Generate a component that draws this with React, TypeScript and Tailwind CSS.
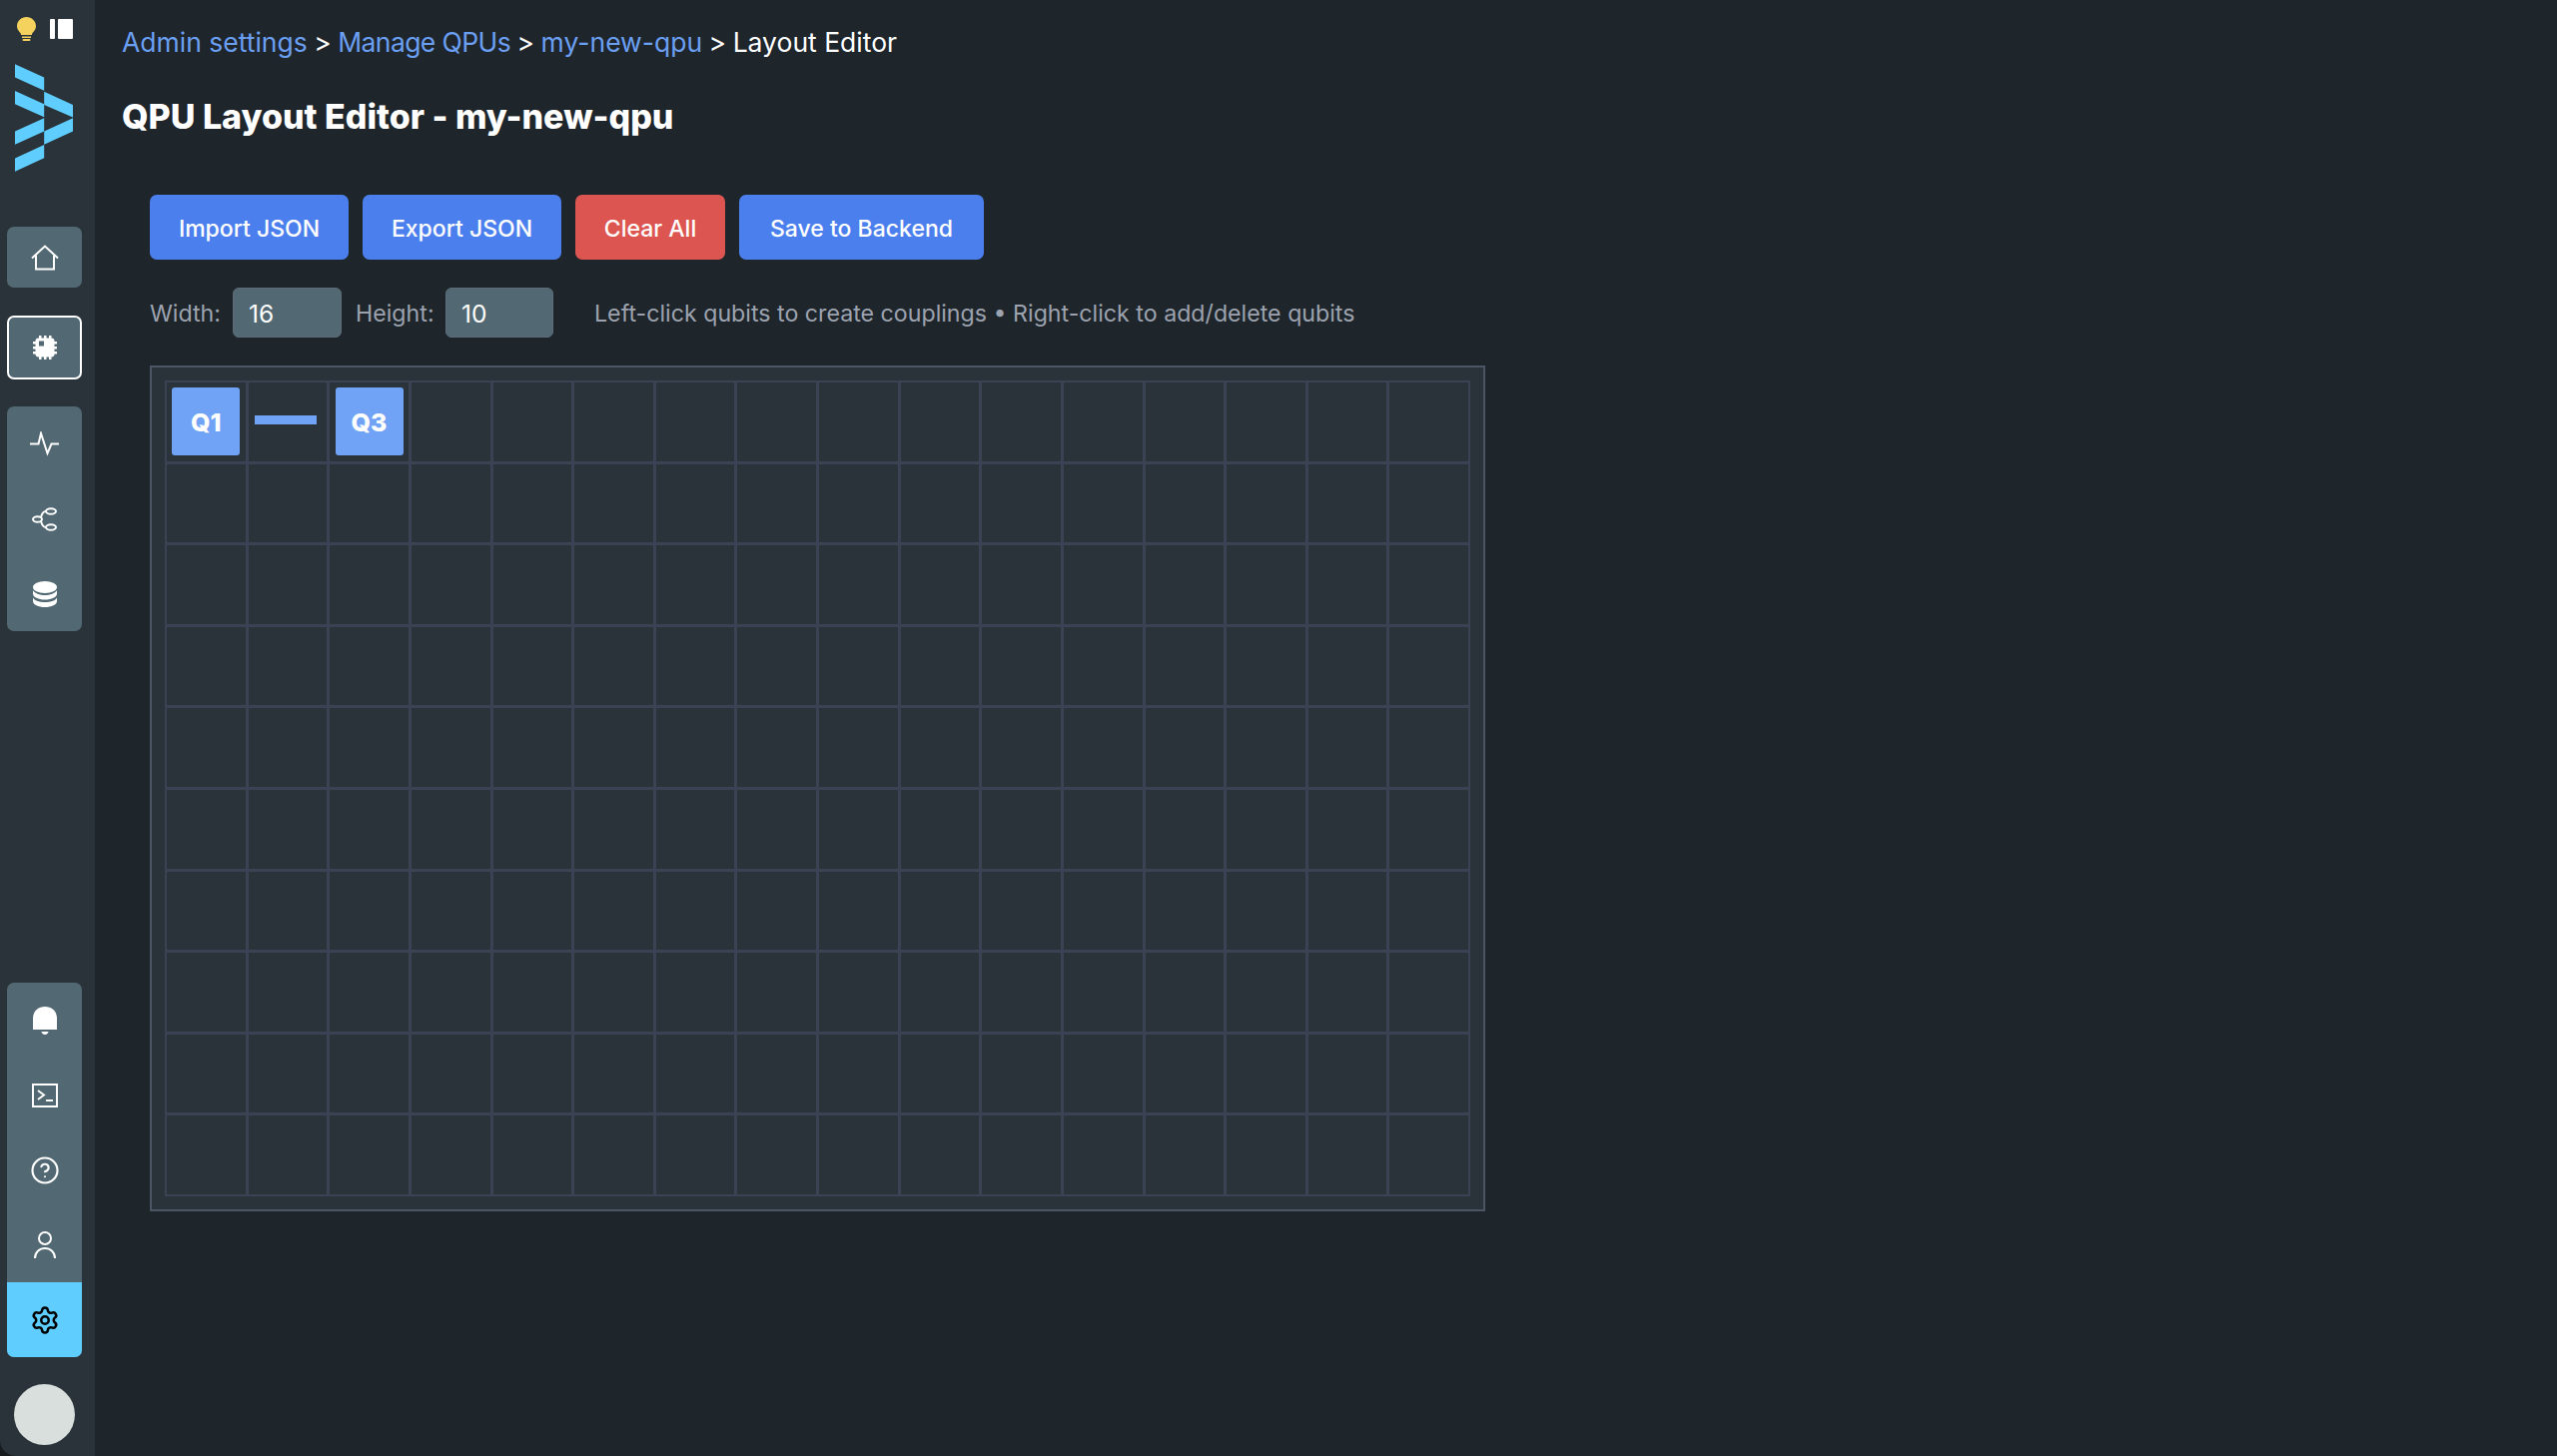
import React from 'react'
import { CircleHelp, Settings } from 'lucide-react'

const FONT = "font-['Inter',sans-serif]"

function HomeIcon() {
  return (
    <svg width="28" height="26" viewBox="0 0 28 26" fill="none" stroke="white" strokeWidth="2">
      <path d="M1 13.500 14 1.500l13 12" />
      <path d="M5 10.500V24.500h18V10.500" />
    </svg>
  )
}

function ChipIcon() {
  return (
    <svg width="24" height="24" viewBox="0 0 24 24" fill="white">
      <rect x="2.500" y="2.500" width="19" height="19" rx="3" />
      <path d="M6 0h2.500v3H6zM11 0h2.500v3H11zM16 0h2.500v3H16zM6 21h2.500v3H6zM11 21h2.500v3H11zM16 21h2.500v3H16zM0 6h3v2.500H0zM0 11h3v2.500H0zM0 16h3v2.500H0zM21 6h3v2.500h-3zM21 11h3v2.500h-3zM21 16h3v2.500h-3z" />
      <rect x="6" y="5.500" width="5" height="5" fill="#526872" />
    </svg>
  )
}

function PulseIcon() {
  return (
    <svg width="30" height="25" viewBox="0 0 30 25" fill="none" stroke="white" strokeWidth="2">
      <path d="M0 12.500h8.500L11 2l6.500 20 4-9.500H29" />
    </svg>
  )
}

function ShareIcon() {
  return (
    <svg width="26" height="24" viewBox="0 0 26 24" fill="none" stroke="white" strokeWidth="2">
      <ellipse cx="19" cy="4" rx="5" ry="2.800" />
      <ellipse cx="5.500" cy="12" rx="4.500" ry="2.800" />
      <ellipse cx="19" cy="20" rx="5" ry="2.800" />
      <path d="M9 10c1-4 2-6 5-6M9 14c1 4 2 6 5 6" />
    </svg>
  )
}

function DatabaseIcon() {
  return (
    <svg width="24" height="26" viewBox="0 0 24 26" fill="white">
      <ellipse cx="12" cy="6" rx="12" ry="6" />
      <path d="M0 9c2 3.500 7 5 12 5s10-1.500 12-5v3.500c0 3.500-5.500 6-12 6S0 16 0 12.500z" />
      <path d="M0 16.500c2 3.500 7 4.500 12 4.500s10-1 12-4.500V20c0 3.500-5.500 6-12 6S0 23.500 0 20z" />
    </svg>
  )
}

function BellIcon() {
  return (
    <svg width="24" height="28" viewBox="0 0 24 28" fill="white">
      <path d="M0 19V12C0 4.500 5 0 12 0s12 4.500 12 12v11H0z" />
      <path d="M8.500 25h7c0 1.500-1.500 3-3.500 3s-3.500-1.500-3.500-3z" />
    </svg>
  )
}

function TerminalIcon() {
  return (
    <svg width="26" height="24" viewBox="0 0 26 24" fill="none" stroke="white" strokeWidth="2">
      <rect x="1" y="1" width="24" height="22" />
      <path d="M6 7l6 4.500L6 16M14 17h7" />
    </svg>
  )
}

function UserIcon() {
  return (
    <svg width="22" height="27" viewBox="0 0 22 27" fill="none" stroke="white" strokeWidth="2">
      <circle cx="11" cy="7" r="6" />
      <path d="M1 27c0-6 4.500-10 10-10s10 4 10 10" />
    </svg>
  )
}

function Logo() {
  return (
    <svg width="58" height="108" viewBox="45 192 175 325" fill="#5fcdfd">
      <polygon points="45,192 133,232 133,272 45,232" />
      <polygon points="45,273 133,313 133,352 45,313" />
      <polygon points="133,275 220,315 220,353 133,315" />
      <polygon points="220,355 220,395 133,435 133,395" />
      <polygon points="133,355 133,395 45,435 45,395" />
      <polygon points="133,436 133,476 45,517 45,477" />
    </svg>
  )
}

function NavItem({ children, active }: { children: React.ReactNode; active?: boolean }) {
  return (
    <div className={active ? 'flex h-[75px] items-center justify-center bg-[#5fcdfd]' : 'flex h-[75px] items-center justify-center'}>
      {children}
    </div>
  )
}

function Sidebar() {
  return (
    <aside className="flex w-[95px] shrink-0 flex-col items-start rounded-bl-[16px] bg-[#293339] pl-[7px] pt-[17px]">
      <div className="ml-[10px] flex h-[24px] w-[56px] items-center justify-between">
        <svg width="19" height="24" viewBox="0 0 19 24" fill="#f5d25e">
          <path d="M9.500 0C4.300 0 0 4 0 9c0 4 2.500 5.500 4 8v1h11v-1c1.500-2.500 4-4 4-8 0-5-4.300-9-9.500-9z" />
          <rect x="5" y="19.500" width="9" height="1.500" />
          <rect x="5.500" y="22" width="8" height="2" rx="1" />
        </svg>
        <div className="flex h-[20px] w-[23px] gap-[3px]">
          <div className="w-[5px] rounded-[1px] bg-white" />
          <div className="flex-1 rounded-[1px] bg-white" />
        </div>
      </div>
      <div className="ml-[8px] mt-[23px]">
        <Logo />
      </div>
      <div className="mt-[55px] flex h-[61px] w-[75px] items-center justify-center rounded-[7px] bg-[#526872]">
        <HomeIcon />
      </div>
      <div className="mt-[28px] flex h-[64px] w-[75px] items-center justify-center rounded-[7px] border-2 border-white bg-[#526872]">
        <ChipIcon />
      </div>
      <div className="mt-[27px] w-[75px] overflow-hidden rounded-[7px] bg-[#526872]">
        <NavItem><PulseIcon /></NavItem>
        <NavItem><ShareIcon /></NavItem>
        <NavItem><DatabaseIcon /></NavItem>
      </div>
      <div className="mt-auto w-[75px] overflow-hidden rounded-[7px] bg-[#526872]">
        <NavItem><BellIcon /></NavItem>
        <NavItem><TerminalIcon /></NavItem>
        <NavItem><CircleHelp size={30} color="white" strokeWidth={1.7} /></NavItem>
        <NavItem><UserIcon /></NavItem>
        <NavItem active><Settings size={30} color="black" strokeWidth={2} /></NavItem>
      </div>
      <div className="mb-[11px] ml-[7px] mt-[27px] h-[61px] w-[61px] rounded-full bg-[#d8dfdd]" />
    </aside>
  )
}

function LayoutGrid() {
  const cells = Array.from({ length: 160 }, (_, i) => i)
  return (
    <div className="mt-[28px] w-[1337px] border-2 border-[#4b5563] bg-[#293339] p-[13px]">
      <div className="grid h-[817px] w-[1307px] grid-cols-16 grid-rows-10 gap-[3px] bg-[#3a4354] p-[2px]">
        {cells.map((i) => (
          <div key={i} className="flex items-center justify-center bg-[#293339] p-[5px]">
            {(i === 0 || i === 2) && (
              <div className="flex h-[68px] w-[68px] shrink-0 items-center justify-center rounded-[3px] bg-[#70a2f6] pt-[2px] text-[25px] font-extrabold text-white">
                {i === 0 ? 'Q1' : 'Q3'}
              </div>
            )}
            {i === 1 && <div className="mb-[3px] mr-[3px] h-[9px] w-[62px] shrink-0 bg-[#70a2f6]" />}
          </div>
        ))}
      </div>
    </div>
  )
}

const btn = 'flex h-[65px] items-center justify-center rounded-[7px] pt-[3px] text-[23px] font-medium text-white'

export default function App() {
  return (
    <div className={`flex h-[1458px] w-[2560px] overflow-hidden bg-[#191c1e] ${FONT}`}>
      <Sidebar />
      <main className="flex-1 bg-[#1e252b] pl-[27px]">
        <div className="flex h-[86px] items-center gap-[6.500px] text-[26.500px]">
          <span className="text-[#6b9ff2]">Admin settings</span>
          <span className="text-white">&gt;</span>
          <span className="tracking-[-0.6px] text-[#6b9ff2]">Manage QPUs</span>
          <span className="text-white">&gt;</span>
          <span className="text-[#6b9ff2]">my-new-qpu</span>
          <span className="text-white">&gt;</span>
          <span className="text-white">Layout Editor</span>
        </div>
        <h1 className="flex h-[60px] items-center text-[34px] font-extrabold text-white">QPU Layout Editor - my-new-qpu</h1>
        <div className="ml-[28px] mt-[49px]">
          <div className="flex gap-[14px]">
            <button className={`${btn} w-[199px] bg-[#4c7fee]`}>Import JSON</button>
            <button className={`${btn} w-[199px] bg-[#4c7fee]`}>Export JSON</button>
            <button className={`${btn} w-[150px] bg-[#dd5550]`}>Clear All</button>
            <button className={`${btn} w-[245px] bg-[#4c7fee]`}>Save to Backend</button>
          </div>
          <div className="mt-[28px] flex h-[50px] items-center text-[23.200px] text-[#9ca3af]">
            <span className="w-[70px] pt-[2px]">Width:</span>
            <div className="ml-[13px] flex h-[50px] w-[109px] items-center rounded-[6px] border border-[#5d6c76] bg-[#526872] pl-[15px] pt-[2px] text-[24.500px] text-white">16</div>
            <span className="ml-[14px] w-[77px] pt-[2px]">Height:</span>
            <div className="ml-[13px] flex h-[50px] w-[108px] items-center rounded-[6px] border border-[#5d6c76] bg-[#526872] pl-[15px] pt-[2px] text-[24.500px] text-white">10</div>
            <span className="ml-[41px] pt-[2px]">Left-click qubits to create couplings • Right-click to add/delete qubits</span>
          </div>
          <LayoutGrid />
        </div>
      </main>
    </div>
  )
}
